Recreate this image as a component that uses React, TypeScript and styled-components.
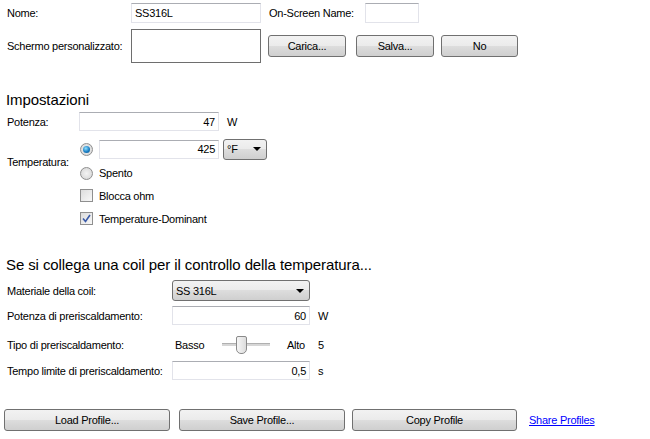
import React from "react";
import styled, { createGlobalStyle } from "styled-components";

const GlobalStyle = createGlobalStyle`
  body {
    margin: 0;
    background: #ffffff;
    font-family: "Liberation Sans", Arial, sans-serif;
    font-size: 11px;
    letter-spacing: -0.25px;
    color: #000;
  }
`;

const Page = styled.div`
  width: 650px;
  height: 439px;
  padding: 3px 0 0 7px;
  box-sizing: border-box;
  display: flex;
  flex-direction: column;
`;

const Row = styled.div<{ $h: number; $mt?: number }>`
  display: flex;
  align-items: center;
  height: ${(p) => p.$h}px;
  margin-top: ${(p) => p.$mt ?? 0}px;
`;

const FooterRow = styled(Row)`
  margin-left: -3px;
`;

const Label = styled.span<{ $w?: number }>`
  width: ${(p) => (p.$w ? `${p.$w}px` : "auto")};
  flex-shrink: 0;
  white-space: nowrap;
`;

const TextBox = styled.div<{ $w: number; $h?: number; $align?: string; $ml?: number }>`
  width: ${(p) => p.$w}px;
  height: ${(p) => p.$h ?? 19}px;
  margin-left: ${(p) => p.$ml ?? 0}px;
  box-sizing: border-box;
  border: 1px solid #e2e3ea;
  border-top-color: #abadb3;
  background: #fff;
  display: flex;
  align-items: center;
  justify-content: ${(p) => (p.$align === "right" ? "flex-end" : "flex-start")};
  padding: 0 3px;
  flex-shrink: 0;
`;

const ImageBox = styled.div`
  width: 130px;
  height: 34px;
  box-sizing: border-box;
  border: 1px solid #6e6e6e;
  background: #fff;
  flex-shrink: 0;
`;

const Button = styled.button<{ $w: number; $ml?: number }>`
  width: ${(p) => p.$w}px;
  height: 22px;
  margin-left: ${(p) => p.$ml ?? 0}px;
  box-sizing: border-box;
  border: 1px solid #707070;
  border-radius: 3px;
  background: linear-gradient(#f2f2f2 0%, #ebebeb 48%, #dddddd 50%, #cfcfcf 100%);
  font-family: inherit;
  font-size: 11px;
  letter-spacing: -0.25px;
  color: #000;
  padding: 0;
  flex-shrink: 0;
`;

const Heading = styled.div<{ $mt: number }>`
  font-size: 15px;
  letter-spacing: -0.1px;
  margin-top: ${(p) => p.$mt}px;
  margin-left: -1px;
  height: 19px;
  line-height: 19px;
`;

const Unit = styled.span<{ $ml: number }>`
  margin-left: ${(p) => p.$ml}px;
`;

const TempGrid = styled.div`
  display: grid;
  grid-template-columns: 72px auto;
  grid-template-rows: 26px 22px;
  margin-top: 5px;
`;

const TempLabel = styled.span`
  grid-row: 1 / span 2;
  align-self: center;
  padding-top: 4px;
`;

const OptionLine = styled.div<{ $h: number }>`
  display: flex;
  align-items: center;
  height: ${(p) => p.$h}px;
  padding-left: 1px;
`;

const Radio = styled.span<{ $on?: boolean }>`
  width: 13px;
  height: 13px;
  border-radius: 50%;
  box-sizing: border-box;
  border: 1px solid #8f8f8f;
  background: radial-gradient(circle, #f4f4f4 0%, #d2d2d2 100%);
  display: inline-flex;
  align-items: center;
  justify-content: center;
  flex-shrink: 0;
  &::after {
    content: "";
    display: ${(p) => (p.$on ? "block" : "none")};
    width: 7px;
    height: 7px;
    border-radius: 50%;
    background: radial-gradient(circle at 40% 35%, #8fe0ff 0%, #1b7fc4 55%, #0a4f86 100%);
  }
`;

const Check = styled.span`
  width: 13px;
  height: 13px;
  box-sizing: border-box;
  border: 1px solid #8f8f8f;
  background: linear-gradient(135deg, #dcdcdc, #f8f8f8);
  display: inline-flex;
  align-items: center;
  justify-content: center;
  flex-shrink: 0;
`;

const OptText = styled.span`
  margin-left: 6px;
`;

const Select = styled.div<{ $w: number; $ml?: number; $h?: number }>`
  width: ${(p) => p.$w}px;
  height: ${(p) => p.$h ?? 21}px;
  margin-left: ${(p) => p.$ml ?? 0}px;
  box-sizing: border-box;
  border: 1px solid #707070;
  border-radius: 3px;
  background: linear-gradient(#f2f2f2 0%, #ebebeb 48%, #dddddd 50%, #cfcfcf 100%);
  display: flex;
  align-items: center;
  justify-content: space-between;
  padding: 0 5px 0 3px;
  flex-shrink: 0;
`;

const Arrow = styled.span`
  width: 0;
  height: 0;
  border-left: 4px solid transparent;
  border-right: 4px solid transparent;
  border-top: 4px solid #000;
`;

const SliderLabel = styled.span<{ $w: number }>`
  width: ${(p) => p.$w}px;
  flex-shrink: 0;
`;

const Slider = styled.div`
  position: relative;
  width: 48px;
  height: 20px;
  flex-shrink: 0;
  margin-right: 17px;
  &::before {
    content: "";
    position: absolute;
    left: 0;
    right: 0;
    top: 8px;
    height: 2px;
    background: #d6d6d6;
    border-top: 1px solid #b0b0b0;
  }
`;

const Thumb = styled.div`
  position: absolute;
  left: 14px;
  top: 1px;
  width: 11px;
  height: 18px;
  box-sizing: border-box;
  border: 1px solid #8a8a8a;
  border-radius: 2px 2px 5px 5px;
  background: linear-gradient(90deg, #f6f6f6, #dcdcdc);
`;

const Link = styled.a`
  color: #0000ff;
  text-decoration: underline;
  margin-left: 12px;
  cursor: pointer;
`;

const App: React.FC = () => {
  return (
    <>
      <GlobalStyle />
      <Page>
        <Row $h={20}>
          <Label $w={124}>Nome:</Label>
          <TextBox $w={130} $h={20}>SS316L</TextBox>
          <Unit $ml={8}>On-Screen Name:</Unit>
          <TextBox $w={54} $h={20} $ml={11} />
        </Row>
        <Row $h={34} $mt={6}>
          <Label $w={124}>Schermo personalizzato:</Label>
          <ImageBox />
          <Button $w={78} $ml={7}>Carica...</Button>
          <Button $w={78} $ml={10}>Salva...</Button>
          <Button $w={77} $ml={7}>No</Button>
        </Row>

        <Heading $mt={27}>Impostazioni</Heading>
        <Row $h={19} $mt={3}>
          <Label $w={72}>Potenza:</Label>
          <TextBox $w={140} $align="right">47</TextBox>
          <Unit $ml={8}>W</Unit>
        </Row>
        <TempGrid>
          <TempLabel>Temperatura:</TempLabel>
          <OptionLine $h={26}>
            <Radio $on />
            <TextBox $w={120} $align="right" $ml={6}>
              425
            </TextBox>
            <Select $w={44} $ml={4}>
              <span>°F</span>
              <Arrow />
            </Select>
          </OptionLine>
          <OptionLine $h={22}>
            <Radio />
            <OptText>Spento</OptText>
          </OptionLine>
        </TempGrid>
        <Row $h={23}>
          <Label $w={73} />
          <Check />
          <OptText>Blocca ohm</OptText>
        </Row>
        <Row $h={23}>
          <Label $w={73} />
          <Check>
            <svg width="9" height="9" viewBox="0 0 9 9">
              <path d="M1 4.5 L3.5 7.5 L8 1" fill="none" stroke="#3a5aa8" strokeWidth="1.6" />
            </svg>
          </Check>
          <OptText>Temperature-Dominant</OptText>
        </Row>

        <Heading $mt={25}>Se si collega una coil per il controllo della temperatura...</Heading>
        <Row $h={21} $mt={6}>
          <Label $w={165}>Materiale della coil:</Label>
          <Select $w={138}>
            <span>SS 316L</span>
            <Arrow />
          </Select>
        </Row>
        <Row $h={19} $mt={5}>
          <Label $w={165}>Potenza di preriscaldamento:</Label>
          <TextBox $w={138} $align="right">60</TextBox>
          <Unit $ml={8}>W</Unit>
        </Row>
        <Row $h={20} $mt={10}>
          <Label $w={168}>Tipo di preriscaldamento:</Label>
          <SliderLabel $w={47}>Basso</SliderLabel>
          <Slider>
            <Thumb />
          </Slider>
          <SliderLabel $w={31}>Alto</SliderLabel>
          <span>5</span>
        </Row>
        <Row $h={19} $mt={6}>
          <Label $w={165}>Tempo limite di preriscaldamento:</Label>
          <TextBox $w={138} $align="right">0,5</TextBox>
          <Unit $ml={8}>s</Unit>
        </Row>

        <FooterRow $h={22} $mt={29}>
          <Button $w={166}>Load Profile...</Button>
          <Button $w={166} $ml={9}>Save Profile...</Button>
          <Button $w={165} $ml={7}>Copy Profile</Button>
          <Link>Share Profiles</Link>
        </FooterRow>
      </Page>
    </>
  );
};

export default App;
